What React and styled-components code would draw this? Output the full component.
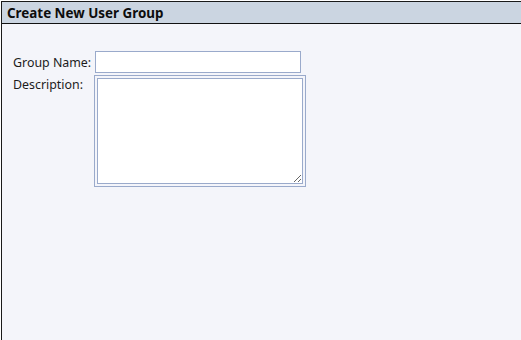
import React from "react";
import styled, { createGlobalStyle } from "styled-components";

const Global = createGlobalStyle`
  html, body { margin: 0; padding: 0; background: #ffffff; }
  body { font-family: "Noto Sans", "Open Sans", sans-serif; }
  #root { height: 340px; }
`;

const Frame = styled.div`
  margin: 1px 0 0 1px;
  height: 339px;
  box-sizing: border-box;
  border-top: 1px solid #1a1a1a;
  border-left: 1px solid #1a1a1a;
  background: #f4f5fa;
  display: flex;
  flex-direction: column;
`;

const Header = styled.div`
  height: 21px;
  background: #cbd5e1;
  border-bottom: 1px solid #111;
  display: flex;
  align-items: center;
  padding-left: 5px;
  font-family: "Noto Sans", sans-serif;
  font-weight: 700;
  font-size: 13.4px;
  color: #0d0d0d;
`;

const Form = styled.div`
  display: grid;
  grid-template-columns: 82px auto;
  row-gap: 2px;
  padding: 27px 0 0 11px;
  justify-content: start;
  align-items: start;
`;

const Label = styled.label`
  font-size: 12.4px;
  color: #1c1c1c;
  line-height: 16px;
  padding-top: ${(p) => p.$top}px;
`;

const TextInput = styled.input`
  box-sizing: border-box;
  width: 206px;
  height: 22px;
  margin: 0;
  border: 1px solid #9aaacb;
  background: #fff;
  outline: none;
`;

const AreaBox = styled.div`
  box-sizing: border-box;
  width: 212px;
  height: 112px;
  margin-left: -1px;
  border: 1px solid #9aaacb;
  padding: 2px;
  background: #f4f5fa;
  display: flex;
`;

const Area = styled.textarea`
  box-sizing: border-box;
  width: 206px;
  height: 106px;
  margin: 0;
  border: 1px solid #9aaacb;
  background: #fff;
  outline: none;
  resize: both;
`;

export default function App() {
  return (
    <>
      <Global />
      <Frame>
        <Header>Create New User Group</Header>
        <Form>
          <Label $top={4}>Group Name:</Label>
          <TextInput type="text" />
          <Label $top={2}>Description:</Label>
          <AreaBox>
            <Area />
          </AreaBox>
        </Form>
      </Frame>
    </>
  );
}
